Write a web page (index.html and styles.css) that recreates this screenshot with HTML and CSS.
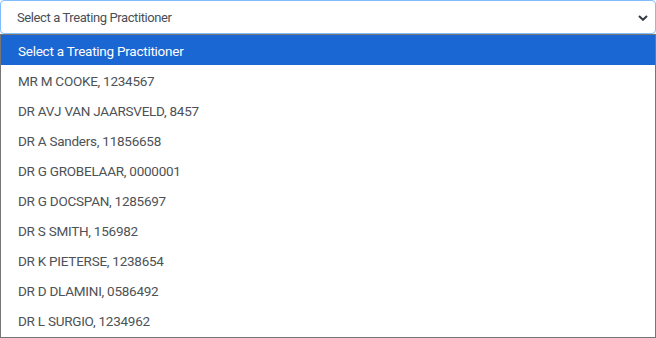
FILE: index.html
```html
<!DOCTYPE html>
<html lang="en">
<head>
  <meta charset="UTF-8" />
  <title>Treating Practitioner</title>
  <link rel="stylesheet" href="styles.css">
</head>
<body>
  <div class="picker">
    <div class="select-box">
      <span class="select-value">Select a Treating Practitioner</span>
      <svg class="chevron" width="10" height="6" viewBox="0 0 10 6">
        <path d="M1 1 L5 4.8 L9 1" fill="none" stroke="#343a40" stroke-width="2" />
      </svg>
    </div>
    <ul class="options">
      <li class="option selected">Select a Treating Practitioner</li>
      <li class="option">MR M COOKE, 1234567</li>
      <li class="option">DR AVJ VAN JAARSVELD, 8457</li>
      <li class="option">DR A Sanders, 11856658</li>
      <li class="option">DR G GROBELAAR, 0000001</li>
      <li class="option">DR G DOCSPAN, 1285697</li>
      <li class="option">DR S SMITH, 156982</li>
      <li class="option">DR K PIETERSE, 1238654</li>
      <li class="option">DR D DLAMINI, 0586492</li>
      <li class="option">DR L SURGIO, 1234962</li>
    </ul>
  </div>
</body>
</html>
```

FILE: styles.css
```css
body {
  margin: 0;
  background: #fff;
  font-family: 'Roboto', 'Liberation Sans', sans-serif;
}

.picker {
  width: 656px;
}

.select-box {
  height: 34px;
  box-sizing: border-box;
  border: 1px solid #80bdff;
  border-radius: 4px;
  display: flex;
  align-items: center;
  justify-content: space-between;
  padding: 0 7px 0 16px;
  color: #495057;
  font-size: 13px;
  letter-spacing: -0.4px;
}

.chevron {
  margin-top: 1px;
}

.options {
  list-style: none;
  margin: 0;
  padding: 0;
  border: 1px solid #767676;
  height: 304px;
  box-sizing: border-box;
}

.option {
  height: 30px;
  box-sizing: border-box;
  padding: 2px 0 0 17px;
  display: flex;
  align-items: center;
  font-size: 13.5px;
  letter-spacing: -0.25px;
  color: #4d5257;
}

.option.selected {
  background: #1a66d2;
  color: #fff;
}
```
